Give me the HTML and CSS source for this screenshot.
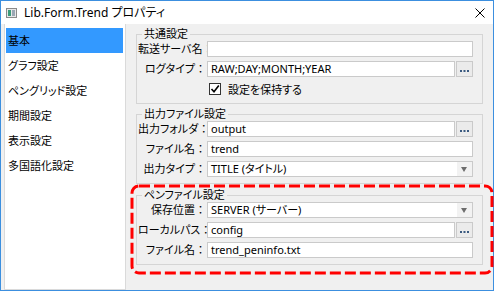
FILE: index.html
```html
<!DOCTYPE html>
<html lang="ja">
<head>
  <meta charset="UTF-8">
  <title>Lib.Form.Trend プロパティ</title>
  <link rel="stylesheet" href="styles.css">
</head>
<body>
  <div class="window">
    <!-- Title bar -->
    <div class="titlebar">
      <svg class="app-icon" width="11" height="10" viewBox="0 0 11 10">
        <rect x="0.5" y="0.5" width="10" height="9" fill="#e8e8e8" stroke="#8a8a8a"/>
        <rect x="2" y="2" width="3" height="6" fill="#3b9b7a"/>
        <rect x="6" y="2" width="3" height="6" fill="#9aa7b4"/>
      </svg>
      <span class="title">Lib.Form.Trend プロパティ</span>
      <svg class="close" width="10" height="10" viewBox="0 0 10 10">
        <path d="M0.5 0.5 L9.5 9.5 M9.5 0.5 L0.5 9.5" stroke="#000" stroke-width="1"/>
      </svg>
    </div>

    <div class="body">
      <!-- Category list -->
      <ul class="nav">
        <li class="active">基本</li>
        <li>グラフ設定</li>
        <li>ペングリッド設定</li>
        <li>期間設定</li>
        <li>表示設定</li>
        <li>多国語化設定</li>
      </ul>

      <!-- Property pages -->
      <div class="content">
        <div class="group">
          <div class="group-head"><span>共通設定</span></div>
          <div class="group-body">
            <div class="row">
              <label>転送サーバ名</label>
              <div class="input"></div>
            </div>
            <div class="row">
              <label>ログタイプ</label>
              <div class="picker">
                <div class="input">RAW;DAY;MONTH;YEAR</div>
                <div class="browse"><svg width="9" height="2" viewBox="0 0 9 2"><rect x="0" y="0" width="2" height="2" fill="#3a5a80"/><rect x="3.5" y="0" width="2" height="2" fill="#3a5a80"/><rect x="7" y="0" width="2" height="2" fill="#3a5a80"/></svg></div>
              </div>
            </div>
            <div class="row">
              <span></span>
              <div class="check-line">
                <span class="checkbox"><svg width="10" height="10" viewBox="0 0 10 10"><path d="M1.5 5 L4 7.8 L8.8 1.5" fill="none" stroke="#000" stroke-width="1.6"/></svg></span>
                <span>設定を保持する</span>
              </div>
            </div>
          </div>
        </div>

        <div class="group group-gap">
          <div class="group-head"><span>出力ファイル設定</span></div>
          <div class="group-body">
            <div class="row">
              <label>出力フォルダ</label>
              <div class="picker">
                <div class="input">output</div>
                <div class="browse"><svg width="9" height="2" viewBox="0 0 9 2"><rect x="0" y="0" width="2" height="2" fill="#3a5a80"/><rect x="3.5" y="0" width="2" height="2" fill="#3a5a80"/><rect x="7" y="0" width="2" height="2" fill="#3a5a80"/></svg></div>
              </div>
            </div>
            <div class="row">
              <label>ファイル名</label>
              <div class="input">trend</div>
            </div>
            <div class="row">
              <label>出力タイプ</label>
              <div class="input select">
                <span>TITLE (タイトル)</span>
                <span class="arrow"></span>
              </div>
            </div>
          </div>
        </div>

        <!-- Highlighted pen file section -->
        <div class="highlight">
          <svg class="dash"><rect width="100%" height="100%" rx="7" ry="7"/></svg>
          <div class="group">
            <div class="group-head"><span>ペンファイル設定</span></div>
            <div class="group-body">
              <div class="row">
                <label>保存位置</label>
                <div class="input select">
                  <span>SERVER (サーバー)</span>
                  <span class="arrow"></span>
                </div>
              </div>
              <div class="row">
                <label>ローカルパス</label>
                <div class="picker">
                  <div class="input">config</div>
                  <div class="browse"><svg width="9" height="2" viewBox="0 0 9 2"><rect x="0" y="0" width="2" height="2" fill="#3a5a80"/><rect x="3.5" y="0" width="2" height="2" fill="#3a5a80"/><rect x="7" y="0" width="2" height="2" fill="#3a5a80"/></svg></div>
                </div>
              </div>
              <div class="row">
                <label>ファイル名</label>
                <div class="input">trend_peninfo.txt</div>
              </div>
            </div>
          </div>
        </div>
      </div>
    </div>
  </div>
</body>
</html>
```

FILE: styles.css
```css
/* Reset */
* {
  box-sizing: border-box;
  margin: 0;
  padding: 0;
}

body {
  background: #fff;
  font-family: "Segoe UI", "Noto Sans", "Noto Sans CJK JP", sans-serif;
  font-size: 11px;
  font-feature-settings: "palt";
  color: #000;
}

/* Window frame */
.window {
  width: 494px;
  height: 291px;
  border: 1px solid #3c8fdf;
  display: flex;
  flex-direction: column;
  background: #f0f0f0;
}

.titlebar {
  height: 23px;
  background: #fff;
  display: flex;
  align-items: center;
  padding-left: 5px;
}

.app-icon {
  margin-top: 1px;
}

.title {
  margin-left: 7px;
  font-size: 12px;
  line-height: 14px;
}

.close {
  margin-left: auto;
  margin-right: 8px;
}

.body {
  flex: 1;
  display: flex;
}

/* Category list */
.nav {
  list-style: none;
  width: 122px;
  margin-left: 3px;
  background: #fff;
  border: 1px solid #dadada;
  border-top: none;
  padding: 4px 2px 0 1px;
}

.nav li {
  height: 25px;
  line-height: 25px;
  padding-left: 2px;
  font-size: 11px;
}

.nav li.active {
  background: #3399ff;
}

/* Property pages */
.content {
  flex: 1;
  padding: 4px 10px 0 10px;
}

/* Group box: header line broken by the caption */
.group-head {
  display: flex;
  height: 13px;
  line-height: 12px;
}

.group-head::before,
.group-head::after {
  content: "";
  height: 7px;
  margin-top: 6px;
  border-top: 1px solid #d5d5d5;
}

.group-head::before {
  width: 5px;
  border-left: 1px solid #d5d5d5;
}

.group-head::after {
  flex: 1;
  border-right: 1px solid #d5d5d5;
}

.group-head span {
  padding: 0 2px;
}

.group-body {
  border: 1px solid #d5d5d5;
  border-top: none;
  padding: 0 9px 6px 1px;
}

.group-gap {
  margin-top: 4px;
}

.row {
  display: grid;
  grid-template-columns: 68px 1fr;
  column-gap: 1px;
  height: 16px;
  margin-top: 4px;
}

.row:first-child {
  margin-top: 0;
}

.row label {
  text-align: right;
  line-height: 16px;
  white-space: nowrap;
}

.row label::after {
  content: "：";
  font-feature-settings: normal;
}

.input {
  height: 16px;
  background: #fff;
  border: 1px solid #cacaca;
  padding-left: 3px;
  line-height: 14px;
  white-space: nowrap;
  overflow: hidden;
}

.picker {
  display: flex;
}

.picker .input {
  flex: 1;
}

.browse {
  width: 17px;
  height: 16px;
  margin-left: 1px;
  background: #ebebeb;
  border: 1px solid #cacaca;
  display: flex;
  justify-content: center;
  align-items: flex-end;
  padding-bottom: 4px;
}

.select {
  display: flex;
  padding-right: 0;
}

.select span:first-child {
  flex: 1;
}

.select .arrow {
  width: 15px;
  background: #f2f2f2;
  position: relative;
}

.select .arrow::after {
  content: "";
  position: absolute;
  left: 4px;
  top: 5px;
  border-left: 3px solid transparent;
  border-right: 3px solid transparent;
  border-top: 5px solid #6d6d6d;
}

.check-line {
  display: flex;
  align-items: center;
  margin-left: 2px;
}

.checkbox {
  width: 12px;
  height: 12px;
  border: 1px solid #333;
  background: #fff;
  display: flex;
  align-items: center;
  justify-content: center;
  margin-right: 7px;
}

/* Red dashed annotation around the pen file group */
.highlight {
  position: relative;
  margin: 0 -10px 0 -6px;
  padding: 5px 10px 9px 6px;
}

.dash {
  position: absolute;
  top: 1.5px;
  left: 1.5px;
  width: calc(100% - 3px);
  height: calc(100% - 3px);
  overflow: visible;
}

.dash rect {
  fill: none;
  stroke: #ff0000;
  stroke-width: 3;
  stroke-dasharray: 11 4;
}
```
